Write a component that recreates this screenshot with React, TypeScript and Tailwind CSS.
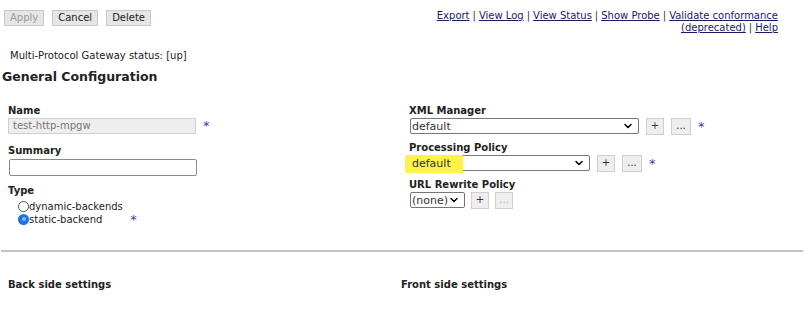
import { ChevronDown } from 'lucide-react'

const font = "font-['DejaVu_Sans',Verdana,sans-serif]"

function Btn({ label, disabled }: { label: string; disabled?: boolean }) {
  return (
    <button
      className={`h-4 px-[5px] border border-[#c8c8c8] bg-[#e6e6e6] text-[10px] leading-none ${disabled ? 'text-[#9a9a9a]' : 'text-[#222]'}`}
    >
      {label}
    </button>
  )
}

function SmallBtn({ label, disabled, wide }: { label: string; disabled?: boolean; wide?: boolean }) {
  return (
    <span
      className={`${wide ? 'w-[20px]' : 'w-[18px]'} h-[17px] flex items-center justify-center border border-[#cfcfcf] bg-[#eeeeee] text-[10px] leading-none ${disabled ? 'text-[#b0b0b0]' : 'text-[#333]'}`}
    >
      {label}
    </span>
  )
}

function Select({ value, width, highlight }: { value: string; width: string; highlight?: boolean }) {
  return (
    <div className={`relative ${width} h-4 border border-[#767676] rounded-[2px] bg-white flex items-center justify-between pl-[1px] pr-1`}>
      {highlight && <span className="absolute -left-[6px] -top-[1px] w-[58px] h-[18px] bg-[#fcf24a] rounded-l-[2px]" />}
      <span className="relative text-[11px] text-[#333] leading-none">{value}</span>
      <ChevronDown size={12} strokeWidth={3} className="text-black" />
    </div>
  )
}

const Star = ({ className = '' }: { className?: string }) => (
  <span className={`text-[#3d3d9e] text-[13px] leading-none ${className}`}>*</span>
)

const Sep = () => <span className="text-[#333] mx-[3px]">|</span>

export default function App() {
  return (
    <div className={`${font} w-[804px] h-[314px] bg-white text-[#222] relative`}>
      {/* toolbar */}
      <div className="flex justify-between pt-[10px]">
        <div className="flex gap-2 pl-1">
          <Btn label="Apply" disabled />
          <Btn label="Cancel" />
          <Btn label="Delete" />
        </div>
        <div className="text-[10px] leading-[12px] text-right pr-[26px] text-[#1a1a66]">
          <div>
            <a className="underline">Export</a><Sep />
            <a className="underline">View Log</a><Sep />
            <a className="underline">View Status</a><Sep />
            <a className="underline">Show Probe</a><Sep />
            <a className="underline">Validate conformance</a>
          </div>
          <div>
            <a className="underline">(deprecated)</a><Sep />
            <a className="underline">Help</a>
          </div>
        </div>
      </div>

      <p className="text-[10px] pl-[10px] mt-[17px] leading-none">Multi-Protocol Gateway status: [up]</p>
      <h1 className="text-[12.5px] font-bold pl-[2px] mt-[10px] leading-none">General Configuration</h1>

      <div className="grid grid-cols-[401px_1fr] mt-[22px]">
        {/* left column */}
        <div className="pl-[8px]">
          <div className="text-[10px] font-bold leading-none">Name</div>
          <div className="flex items-center mt-[2px]">
            <div className="w-[188px] h-4 border border-[#d0d0d0] bg-[#eeeeee] text-[10px] text-[#777] pl-[4px] flex items-center">test-http-mpgw</div>
            <Star className="ml-[7px]" />
          </div>
          <div className="text-[10px] font-bold leading-none mt-[12px]">Summary</div>
          <div className="w-[188px] h-[17px] border border-[#8a8a8a] rounded-[2px] mt-[3px] ml-[1px]" />
          <div className="text-[10px] font-bold leading-none mt-[10px]">Type</div>
          <div className="pl-[10px] mt-[4px] text-[10px] leading-[13px]">
            <label className="flex items-center">
              <span className="w-[11px] h-[11px] rounded-full border border-[#555] inline-block" />
              dynamic-backends
            </label>
            <label className="flex items-center">
              <span className="w-[11px] h-[11px] rounded-full bg-[#1a73e8] inline-flex items-center justify-center">
                <span className="w-[4px] h-[4px] rounded-full bg-[#8fb8f0]" />
              </span>
              static-backend
              <Star className="ml-[28px]" />
            </label>
          </div>
        </div>

        {/* right column */}
        <div className="pl-[8px]">
          <div className="text-[10px] font-bold leading-none">XML Manager</div>
          <div className="flex items-center gap-[7px] mt-[2px] ml-[1px]">
            <Select value="default" width="w-[229px]" />
            <SmallBtn label="+" />
            <SmallBtn label="..." wide />
            <Star />
          </div>
          <div className="text-[10px] font-bold leading-none mt-[8px]">Processing Policy</div>
          <div className="flex items-center gap-[7px] mt-[2px] ml-[1px]">
            <Select value="default" width="w-[180px]" highlight />
            <SmallBtn label="+" />
            <SmallBtn label="..." wide />
            <Star />
          </div>
          <div className="text-[10px] font-bold leading-none mt-[8px]">URL Rewrite Policy</div>
          <div className="flex items-center gap-[6px] mt-[2px] ml-[1px]">
            <Select value="(none)" width="w-[55px]" />
            <SmallBtn label="+" />
            <SmallBtn label="..." disabled />
          </div>
        </div>
      </div>

      <hr className="mx-[1px] mt-[24px] border-t-2 border-[#c4c4c4]" />

      <div className="grid grid-cols-[393px_1fr] mt-[25px] pl-[8px] text-[10px] font-bold">
        <span>Back side settings</span>
        <span>Front side settings</span>
      </div>
    </div>
  )
}
